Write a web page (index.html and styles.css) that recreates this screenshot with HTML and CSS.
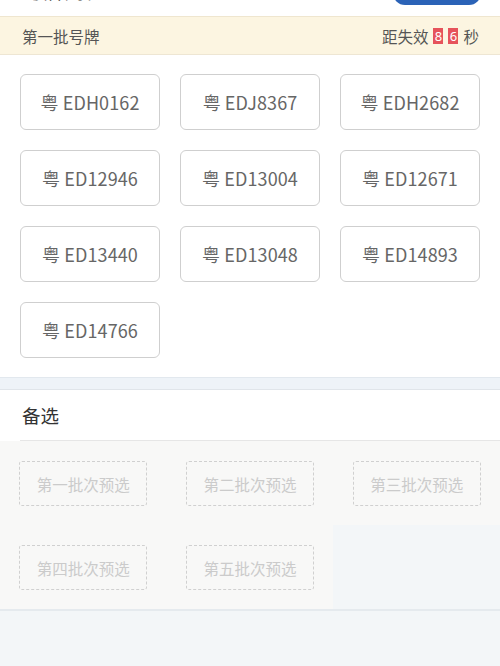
FILE: index.html
```html
<!DOCTYPE html>
<html lang="zh">
<head>
<meta charset="utf-8">
<link rel="stylesheet" href="styles.css">
</head>
<body>
<div class="top">
  <div class="top-inner">
    <span class="top-title">号牌列表</span>
    <span class="top-btn"></span>
  </div>
</div>
<div class="batch-bar">
  <span class="batch-title">第一批号牌</span>
  <span class="countdown"><span>距失效</span><span class="digit">8</span><span class="digit">6</span><span>秒</span></span>
</div>
<div class="plates">
  <div class="plate">粤 EDH0162</div>
  <div class="plate">粤 EDJ8367</div>
  <div class="plate">粤 EDH2682</div>
  <div class="plate">粤 ED12946</div>
  <div class="plate">粤 ED13004</div>
  <div class="plate">粤 ED12671</div>
  <div class="plate">粤 ED13440</div>
  <div class="plate">粤 ED13048</div>
  <div class="plate">粤 ED14893</div>
  <div class="plate">粤 ED14766</div>
</div>
<div class="band"></div>
<div class="alt-head"><span class="alt-title">备选</span></div>
<div class="alt-grid">
  <div class="cell"><div class="pre">第一批次预选</div></div>
  <div class="cell"><div class="pre">第二批次预选</div></div>
  <div class="cell"><div class="pre">第三批次预选</div></div>
  <div class="cell"><div class="pre">第四批次预选</div></div>
  <div class="cell"><div class="pre">第五批次预选</div></div>
</div>
<div class="bottom"></div>
</body>
</html>
```

FILE: styles.css
```css
* { box-sizing: border-box; }
html, body {
  margin: 0;
  padding: 0;
  background: #f3f6f8;
  font-family: "Noto Sans CJK SC", "Noto Sans", sans-serif;
}
.top {
  height: 16px;
  overflow: hidden;
  background: #fff;
}
.top-inner {
  display: flex;
  justify-content: space-between;
  align-items: flex-end;
  height: 36px;
  margin-top: -31px;
  padding: 0 19px 0 24px;
}
.top-title {
  font-size: 20px;
  line-height: 26px;
  color: #333;
  margin-bottom: 1px;
}
.top-btn {
  width: 88px;
  height: 36px;
  border-radius: 12px;
  background: #2b63b7;
}
.batch-bar {
  height: 39px;
  background: #fcf5e1;
  border-top: 1px solid #efe6cf;
  border-bottom: 1px solid #eee6d3;
  display: flex;
  justify-content: space-between;
  align-items: center;
  padding: 0 21px 0 22px;
  font-size: 15.5px;
  color: #555;
}
.countdown {
  display: flex;
  align-items: center;
}
.digit {
  display: inline-block;
  width: 10px;
  height: 16px;
  line-height: 16px;
  background: #e6535b;
  color: #fff;
  font-family: "Noto Sans", sans-serif;
  font-size: 13px;
  text-align: center;
  margin-left: 5px;
}
.digit + .digit { margin-left: 5px; }
.digit + .digit + span { margin-left: 5px; }
.plates {
  background: #fff;
  display: grid;
  grid-template-columns: repeat(3, 140px);
  column-gap: 20px;
  row-gap: 20px;
  padding: 19px 20px 19px;
}
.plate {
  height: 56px;
  border: 1px solid #cfcfcf;
  border-radius: 6px;
  display: flex;
  align-items: center;
  justify-content: center;
  font-size: 18px;
  color: #666;
  letter-spacing: 0.1px;
}
.band {
  height: 13px;
  background: #eef3f8;
  border-top: 1px solid #e2e8ee;
  border-bottom: 1px solid #e0e5ea;
}
.alt-head {
  background: #fff;
  padding-left: 20px;
}
.alt-title {
  display: block;
  height: 51px;
  line-height: 50px;
  padding-left: 2px;
  font-size: 18.5px;
  color: #333;
  border-bottom: 1px solid #e6e6e6;
}
.alt-grid {
  display: grid;
  grid-template-columns: repeat(3, 1fr);
  background: #f3f6f8;
  border-bottom: 2px solid #e5eaee;
}
.cell {
  height: 84px;
  background: #f8f8f7;
  display: flex;
  justify-content: center;
  padding-top: 20px;
}
.pre {
  width: 128px;
  height: 45px;
  border: 1.5px dashed #d0d0d0;
  border-radius: 3px;
  display: flex;
  align-items: center;
  justify-content: center;
  font-size: 15.5px;
  color: #cbcbcb;
}
.bottom {
  height: 60px;
  background: #f3f6f8;
}
```
